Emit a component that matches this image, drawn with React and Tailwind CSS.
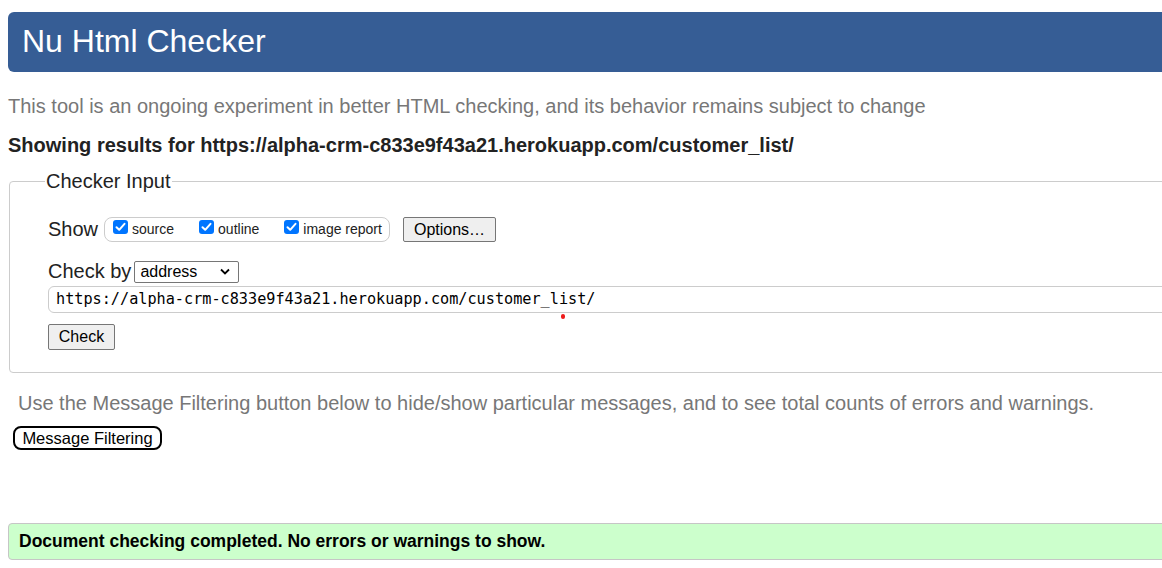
import React from "react";

const sans = { fontFamily: '"Liberation Sans", Arial, sans-serif' };

function Tick({ label }) {
  return (
    <label className="flex items-center">
      <span className="w-[15px] h-[14px] rounded-[3px] bg-[#0075ff] flex items-center justify-center -mt-[4px]">
        <svg width="11" height="10" viewBox="0 0 11 10" fill="none">
          <path d="M1.5 5.2 L4.2 7.8 L9.5 1.8" stroke="white" strokeWidth="2" strokeLinecap="round" strokeLinejoin="round" />
        </svg>
      </span>
      <span className="ml-[4px] text-[14px] text-[#222]">{label}</span>
    </label>
  );
}

export default function App() {
  return (
    <div className="w-[1162px] h-[568px] overflow-hidden bg-white text-[#222]" style={sans}>
      <div className="w-[1230px] pl-[8px]">
        {/* header bar */}
        <div className="mt-[12px] h-[60px] rounded-l-[6px] bg-[#365d95] flex items-center pl-[14px]">
          <h1 className="text-[32px] text-white leading-none -mt-[2px]">Nu Html Checker</h1>
        </div>

        <p className="mt-[22px] text-[20px] leading-[24px] text-[#777]">
          This tool is an ongoing experiment in better HTML checking, and its behavior remains subject to change
        </p>
        <p className="mt-[15px] text-[20px] leading-[24px] font-bold text-[#222]">
          Showing results for https://alpha-crm-c833e9f43a21.herokuapp.com/customer_list/
        </p>

        <fieldset className="mt-[13px] ml-[1px] border border-[#ccc] rounded-[4px] pl-[38px] pb-[22px]">
          <legend className="-ml-[3px] px-[1px] text-[20px] leading-[23px] text-[#222]">Checker Input</legend>

          <div className="mt-[24px] flex items-center h-[24px]">
            <span className="text-[20px] leading-[23px]">Show</span>
            <div className="ml-[6px] h-[25px] w-[286px] border border-[#ccc] rounded-[8px] flex items-center pl-[8px] gap-[25px]">
              <Tick label="source" />
              <Tick label="outline" />
              <Tick label="image report" />
            </div>
            <button className="ml-[13px] h-[25px] w-[93px] bg-[#efefef] border border-[#767676] rounded-[2px] text-[16px] text-black">
              Options…
            </button>
          </div>

          <div className="mt-[19px] flex items-center">
            <span className="text-[20px] leading-[23px]">Check by</span>
            <div className="ml-[3px] h-[22px] w-[105px] border border-[#767676] rounded-[2px] flex items-center justify-between pl-[5px] pr-[8px]">
              <span className="text-[16px] text-black leading-none">address</span>
              <svg width="10" height="7" viewBox="0 0 10 7" fill="none">
                <path d="M1 1.5 L5 5.5 L9 1.5" stroke="black" strokeWidth="1.8" />
              </svg>
            </div>
          </div>

          <div className="relative mt-[3px] h-[27px] border border-[#ccc] rounded-[6px] flex items-center pl-[7px]">
            <span className="text-[15.2px] text-black" style={{ fontFamily: '"DejaVu Sans Mono", monospace' }}>
              https://alpha-crm-c833e9f43a21.herokuapp.com/customer_list/
            </span>
            <span className="absolute left-[512px] top-[27px] w-[4px] h-[5px] rounded-full bg-[#ee1c1c]" />
          </div>

          <button className="mt-[11px] h-[26px] w-[67px] bg-[#efefef] border border-[#767676] rounded-[2px] text-[16px] text-black">
            Check
          </button>
        </fieldset>

        <p className="mt-[18px] ml-[10px] text-[20px] leading-[24px] text-[#777]">
          Use the Message Filtering button below to hide/show particular messages, and to see total counts of errors and warnings.
        </p>
        <button className="mt-[11px] ml-[5px] h-[24px] w-[149px] border-2 border-black rounded-[8px] text-[16.5px] text-black leading-none">
          Message Filtering
        </button>

        <div className="mt-[72px] h-[37px] border border-[#c6c6c6] rounded-[4px] bg-[#ccffcc] flex items-center pl-[10px]">
          <span className="text-[17.5px] font-bold text-black">Document checking completed. No errors or warnings to show.</span>
        </div>
      </div>
    </div>
  );
}
